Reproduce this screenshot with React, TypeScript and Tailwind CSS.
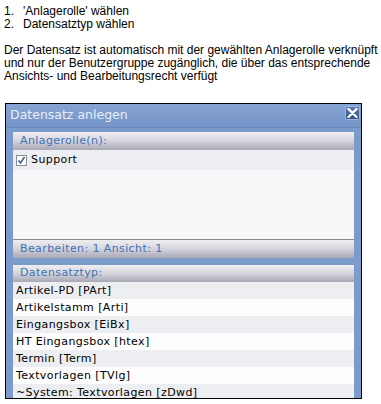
import React from "react";

const rows = [
  "Artikel-PD [PArt]",
  "Artikelstamm [Arti]",
  "Eingangsbox [EiBx]",
  "HT Eingangsbox [htex]",
  "Termin [Term]",
  "Textvorlagen [TVlg]",
  "~System: Textvorlagen [zDwd]",
];

function SectionHeader({ children, h }: { children: React.ReactNode; h: string }) {
  return (
    <div
      className={`${h} flex items-center pl-[7px] text-[11px] tracking-[0.4px] text-[#3f72b4] bg-gradient-to-b from-[#efeff2] via-[#d4d4dc] to-[#a8a8b6]`}
    >
      {children}
    </div>
  );
}

export default function App() {
  return (
    <div className="w-[381px] h-[404px] bg-white overflow-hidden">
      <div className="pl-[4px] pt-[5px] text-[12px] leading-[13px] text-black font-['Liberation_Sans',Arial,sans-serif]">
        <div className="flex">
          <span className="w-[19px]">1.</span>
          <span>'Anlagerolle' wählen</span>
        </div>
        <div className="flex">
          <span className="w-[19px]">2.</span>
          <span>Datensatztyp wählen</span>
        </div>
        <p className="mt-[13px] pr-[2px]">
          Der Datensatz ist automatisch mit der gewählten Anlagerolle verknüpft und nur der Benutzergruppe zugänglich, die über das entsprechende Ansichts- und Bearbeitungsrecht verfügt
        </p>
      </div>

      <div className="ml-[5px] mt-[20px] w-[357px] h-[296px] border border-black bg-[#7b9bcb] overflow-hidden relative font-['DejaVu_Sans',Verdana,sans-serif]">
        <div className="h-[24px] flex items-center pl-[4px] text-[12.5px] text-[#e8eef9] bg-gradient-to-b from-[#86a4d2] to-[#7595c8] border-b border-[#6c8abb]">
          Datensatz anlegen
        </div>
        <div className="absolute top-[2px] right-[1px] w-[15px] h-[14px] rounded-[2px] bg-gradient-to-b from-[#5f7db2] to-[#324f86] border border-[#9fb4d8] flex items-center justify-center">
          <svg width="11" height="10" viewBox="0 0 11 10">
            <path d="M1.5 1 L9.5 9 M9.5 1 L1.5 9" stroke="#ffffff" strokeWidth="2.4" strokeLinecap="round" />
          </svg>
        </div>

        <div className="px-[7px] pt-[4px]">
          <div className="bg-[#f7f7f9]">
            <SectionHeader h="h-[18px]">Anlagerolle(n):</SectionHeader>
            <div className="h-[20px] bg-[#edeef2] flex items-center pl-[3px] text-[11px] tracking-[0.4px] text-black">
              <span className="w-[11px] h-[11px] bg-white border border-[#8c8c96] flex items-center justify-center mr-[4px]">
                <svg width="9" height="9" viewBox="0 0 9 9">
                  <path d="M1.5 4.5 L3.5 7 L7.5 1" stroke="#3a5c98" strokeWidth="1.5" fill="none" />
                </svg>
              </span>
              Support
            </div>
            <div className="h-[69px]" />
            <div className="border-t border-[#8a8a8a]">
              <SectionHeader h="h-[18px]">Bearbeiten: 1 Ansicht: 1</SectionHeader>
            </div>
          </div>

          <div className="mt-[7px] bg-white">
            <SectionHeader h="h-[17px]">Datensatztyp:</SectionHeader>
            {rows.map((r, i) => (
              <div
                key={r}
                className={`h-[17px] flex items-center pl-[3px] pt-[1px] text-[11px] tracking-[0.4px] text-black ${i % 2 === 0 ? "bg-[#edeef2]" : "bg-[#fdfdfd]"}`}
              >
                {r}
              </div>
            ))}
          </div>
        </div>
      </div>
    </div>
  );
}
